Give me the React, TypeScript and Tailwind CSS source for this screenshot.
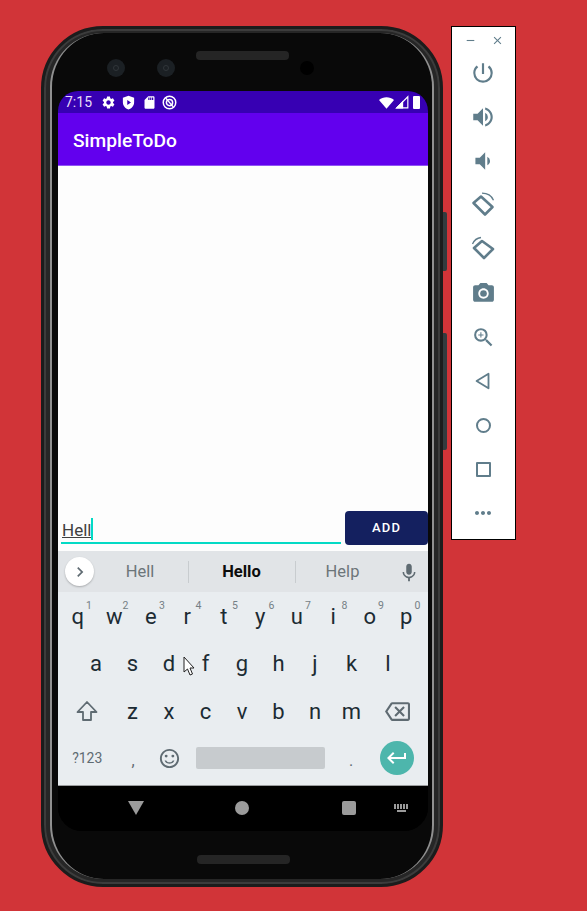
import {
  MdSettings,
  MdSdCard,
  MdPowerSettingsNew,
  MdVolumeUp,
  MdVolumeDown,
  MdCameraAlt,
  MdZoomIn,
  MdKeyboardVoice,
  MdOutlineBackspace,
  MdKeyboardReturn,
  MdOutlineSentimentSatisfied,
  MdChevronRight,
  MdClose,
  MdRemove,
  MdMoreHoriz,
} from "react-icons/md";

const row1 = [
  ["q", "1"],
  ["w", "2"],
  ["e", "3"],
  ["r", "4"],
  ["t", "5"],
  ["y", "6"],
  ["u", "7"],
  ["i", "8"],
  ["o", "9"],
  ["p", "0"],
];
const row2 = ["a", "s", "d", "f", "g", "h", "j", "k", "l"];
const row3 = ["z", "x", "c", "v", "b", "n", "m"];

function Key({ label, hint }: { label: string; hint?: string }) {
  return (
    <div className="relative flex h-full w-[36.5px] items-center justify-center text-[22px] text-[#1c2b33]">
      {label}
      {hint && <span className="absolute right-[4px] top-[8px] text-[10.5px] leading-[12px] text-[#757f85]">{hint}</span>}
    </div>
  );
}

function StatusIcons() {
  return (
    <div className="flex h-[22px] shrink-0 items-center bg-[#3700b3] pl-[7px] pr-[8px] text-white">
      <span className="w-[35.5px] text-[14px] leading-none text-[#e6dcf7]">7:15</span>
      <MdSettings size={15} />
      <svg viewBox="0 0 24 24" className="ml-[5.5px] h-[15px] w-[15px] fill-white">
        <path d="M12 1 3 4.5v7c0 5.5 3.8 10 9 11.5 5.2-1.5 9-6 9-11.5v-7zM10 8l6 4-6 4z" fillRule="evenodd" />
      </svg>
      <MdSdCard size={15} className="ml-[5.5px]" />
      <svg viewBox="0 0 24 24" className="ml-[5.5px] h-[15px] w-[15px] fill-none stroke-white stroke-[2.4]">
        <circle cx="12" cy="12" r="10" />
        <circle cx="12" cy="12" r="5" />
        <path d="M6 5l12 14" />
      </svg>
      <div className="ml-auto flex items-center">
        <svg viewBox="0 0 24 24" className="h-[15px] w-[15px] fill-white">
          <path d="M0 8c6.5-6 17.5-6 24 0L12 22z" />
        </svg>
        <svg viewBox="0 0 24 24" className="ml-[1px] h-[14px] w-[14px] fill-none stroke-white stroke-2">
          <path d="M3 22 22 3v19z" />
          <path d="M3 22 13 12v10z" fill="#fff" />
        </svg>
        <div className="ml-[4px] h-[13px] w-[7px] rounded-[1px] bg-white" />
      </div>
    </div>
  );
}

function Keyboard() {
  return (
    <div className="flex flex-col font-['Roboto',sans-serif]">
      <div className="flex h-[41px] items-center bg-[#e1e4e7]">
        <div className="ml-[7px] flex h-[29px] w-[29px] shrink-0 items-center justify-center rounded-full bg-white text-[#5f6b72] shadow-[0_1px_2px_rgba(0,0,0,0.25)]">
          <MdChevronRight size={20} />
        </div>
        <div className="flex w-[93px] justify-center pr-[1px] pt-[2px] text-[16.5px] text-[#6c7579]">Hell</div>
        <div className="ml-[1px] h-[22px] w-px bg-[#c8cccf]" />
        <div className="flex w-[106px] justify-center pr-[1px] pt-[2px] text-[16.5px] font-bold text-[#0c0c0c]">Hello</div>
        <div className="h-[22px] w-px bg-[#c8cccf]" />
        <div className="flex w-[94px] justify-center pr-[1px] pt-[2px] text-[16.5px] text-[#6c7579]">Help</div>
        <MdKeyboardVoice size={22} className="ml-[8px] text-[#5f6b72]" />
      </div>
      <div className="flex h-[193px] flex-col bg-[#e9edf0] pr-[2px]">
        <div className="flex h-[48px] justify-center">
          {row1.map(([k, n]) => (
            <Key key={k} label={k} hint={n} />
          ))}
        </div>
        <div className="flex h-[47px] justify-center">
          {row2.map((k) => (
            <Key key={k} label={k} />
          ))}
        </div>
        <div className="flex h-[48px] justify-center">
          <div className="flex w-[55px] items-center justify-center text-[#5f6b72]">
            <svg viewBox="0 0 24 24" className="h-[24px] w-[24px] fill-none stroke-current stroke-[1.8]">
              <path d="M12 3 2.5 13H8v8h8v-8h5.5z" strokeLinejoin="round" />
            </svg>
          </div>
          {row3.map((k) => (
            <Key key={k} label={k} />
          ))}
          <div className="flex w-[55px] items-center justify-center text-[#5f6b72]">
            <MdOutlineBackspace size={25} />
          </div>
        </div>
        <div className="flex h-[46px] items-center justify-center text-[#5f6b72]">
          <div className="flex w-[55px] justify-center text-[14px]">?123</div>
          <div className="flex w-[36.5px] justify-center pt-[6px] text-[16px]">,</div>
          <div className="flex w-[36.5px] justify-center">
            <MdOutlineSentimentSatisfied size={23} />
          </div>
          <div className="flex w-[145px] justify-center">
            <div className="h-[22px] w-[129px] rounded-[2px] bg-[#c7cbce]" />
          </div>
          <div className="flex w-[36.5px] justify-center pt-[6px] text-[16px]">.</div>
          <div className="flex w-[55px] justify-center">
            <div className="flex h-[34px] w-[34px] items-center justify-center rounded-full bg-[#4db6ac] text-white">
              <MdKeyboardReturn size={24} />
            </div>
          </div>
        </div>
      </div>
    </div>
  );
}

function NavBar() {
  return (
    <div className="flex h-[46px] shrink-0 items-center border-t border-[#9a9c9e] bg-black pb-[1px]">
      <div className="ml-[70px] h-0 w-0 border-x-[8px] border-t-[14px] border-x-transparent border-t-[#9b9b9b]" />
      <div className="ml-[91px] h-[14px] w-[14px] rounded-full bg-[#9b9b9b]" />
      <div className="ml-[93px] h-[14px] w-[14px] rounded-[2px] bg-[#9b9b9b]" />
      <div className="ml-[38px] flex flex-col items-center gap-[1px]">
        <div className="h-[5px] w-[15px] bg-[repeating-linear-gradient(90deg,#9b9b9b_0_2px,transparent_2px_3px)]" />
        <div className="h-[2px] w-[9px] bg-[#9b9b9b]" />
      </div>
    </div>
  );
}

function Screen() {
  return (
    <div className="flex h-[740px] w-[370px] flex-col overflow-hidden rounded-t-[20px] rounded-b-[24px] bg-black">
      <StatusIcons />
      <div className="flex h-[53px] shrink-0 items-center border-b border-[#8f55f3] bg-[#6200ee] pl-[15px] pt-[4px] text-[19.2px] font-medium text-white">
        SimpleToDo
      </div>
      <div className="flex flex-1 items-end bg-[#fdfdfd] pb-[6px]">
        <div className="mb-[1px] ml-[3px] flex h-[25px] w-[280px] items-end border-b-2 border-[#03dac5] pb-[2px] pl-[1px]">
          <span className="text-[17px] leading-[20px] text-[#404040] underline">Hell</span>
          <span className="h-[22px] w-[2px] bg-[#03dac5]" />
        </div>
        <div className="ml-[4px] flex h-[34px] w-[83px] items-center justify-center rounded-[4px] bg-[#14205f] text-[13px] font-medium tracking-[1.2px] text-white">
          ADD
        </div>
      </div>
      <Keyboard />
      <NavBar />
    </div>
  );
}

function Lens() {
  return (
    <div className="flex h-[18px] w-[18px] items-center justify-center rounded-full bg-[#1b2024]">
      <div className="h-[6px] w-[6px] rounded-full border border-[#30363a]" />
    </div>
  );
}

function Phone() {
  return (
    <div className="relative h-[861px] w-[402px] shrink-0 rounded-[62px] border-[3px] border-[#1c1c1c] bg-[#262626] pb-[4px] pt-[4px] shadow-[inset_0_0_0_2px_#3c3c3c]">
      <div className="mx-[6px] flex h-[846px] flex-col items-center rounded-[54px] border-x-2 border-[#909090] bg-[#090909] pl-[2px]">
        <div className="flex h-[58px] w-[374px] shrink-0 items-start pl-[51px]">
          <div className="mt-[26px]">
            <Lens />
          </div>
          <div className="ml-[32px] mt-[26px]">
            <Lens />
          </div>
          <div className="ml-[21px] mt-[18px] h-[9px] w-[93px] rounded-[4px] bg-[#252525]" />
          <div className="ml-[11px] mt-[28px] h-[14px] w-[14px] rounded-full bg-black" />
        </div>
        <Screen />
        <div className="mt-[24px] h-[9px] w-[93px] rounded-[4px] bg-[#252525]" />
      </div>
      <div className="absolute left-[399px] top-[183px] h-[59px] w-[4px] rounded-r-[2px] bg-[#333b3e]" />
      <div className="absolute left-[399px] top-[304px] h-[117px] w-[4px] rounded-r-[2px] bg-[#333b3e]" />
    </div>
  );
}

function ToolButton({ children }: { children: React.ReactNode }) {
  return <div className="flex h-[44px] items-center justify-center pr-[1px] text-[#607d8b]">{children}</div>;
}

function Toolbar() {
  return (
    <div className="ml-[8px] flex h-[514px] w-[65px] shrink-0 flex-col border border-black bg-white">
      <div className="flex h-[24px] shrink-0 items-center justify-center gap-[14px] pt-[2px] text-[#607d8b]">
        <MdRemove size={13} />
        <MdClose size={13} />
      </div>
      <ToolButton>
        <MdPowerSettingsNew size={26} />
      </ToolButton>
      <ToolButton>
        <MdVolumeUp size={26} />
      </ToolButton>
      <ToolButton>
        <MdVolumeDown size={26} />
      </ToolButton>
      <ToolButton>
        <svg viewBox="0 0 26 26" className="h-[26px] w-[26px] fill-none stroke-current">
          <path d="M3.5 11 11 4.5 22.5 15 15 22.5z" strokeWidth="2.6" strokeLinejoin="round" />
          <path d="M12 1.2c5 0 9.5 2.5 11.5 7" strokeWidth="1.3" />
        </svg>
      </ToolButton>
      <ToolButton>
        <svg viewBox="0 0 26 26" className="h-[26px] w-[26px] fill-none stroke-current">
          <path d="M4 12 12 5l11 8-9 9z" strokeWidth="2.6" strokeLinejoin="round" />
          <path d="M2.5 8c1.5-3.5 4.5-6 8.5-6.5" strokeWidth="1.3" />
        </svg>
      </ToolButton>
      <ToolButton>
        <MdCameraAlt size={25} />
      </ToolButton>
      <ToolButton>
        <MdZoomIn size={25} />
      </ToolButton>
      <ToolButton>
        <svg viewBox="0 0 24 24" className="h-[22px] w-[22px] fill-none stroke-current stroke-2">
          <path d="M18 4v16L5 12z" strokeLinejoin="round" />
        </svg>
      </ToolButton>
      <ToolButton>
        <div className="h-[15px] w-[15px] rounded-full border-2 border-current" />
      </ToolButton>
      <ToolButton>
        <div className="h-[15px] w-[15px] rounded-[1px] border-2 border-current" />
      </ToolButton>
      <ToolButton>
        <MdMoreHoriz size={24} />
      </ToolButton>
    </div>
  );
}

export default function App() {
  return (
    <div className="relative flex h-[911px] w-[587px] items-start overflow-hidden bg-[#d13438] pl-[41px] pt-[26px] font-['Roboto',sans-serif]">
      <Phone />
      <Toolbar />
      {/* mouse pointer over the keyboard */}
      <svg viewBox="0 0 12 20" className="absolute left-[183px] top-[656px] h-[20px] w-[12px]">
        <path d="M1 1v15l3.5-3 2.5 6 2.5-1-2.5-6H11z" fill="#fff" stroke="#222" strokeWidth="1" />
      </svg>
    </div>
  );
}
